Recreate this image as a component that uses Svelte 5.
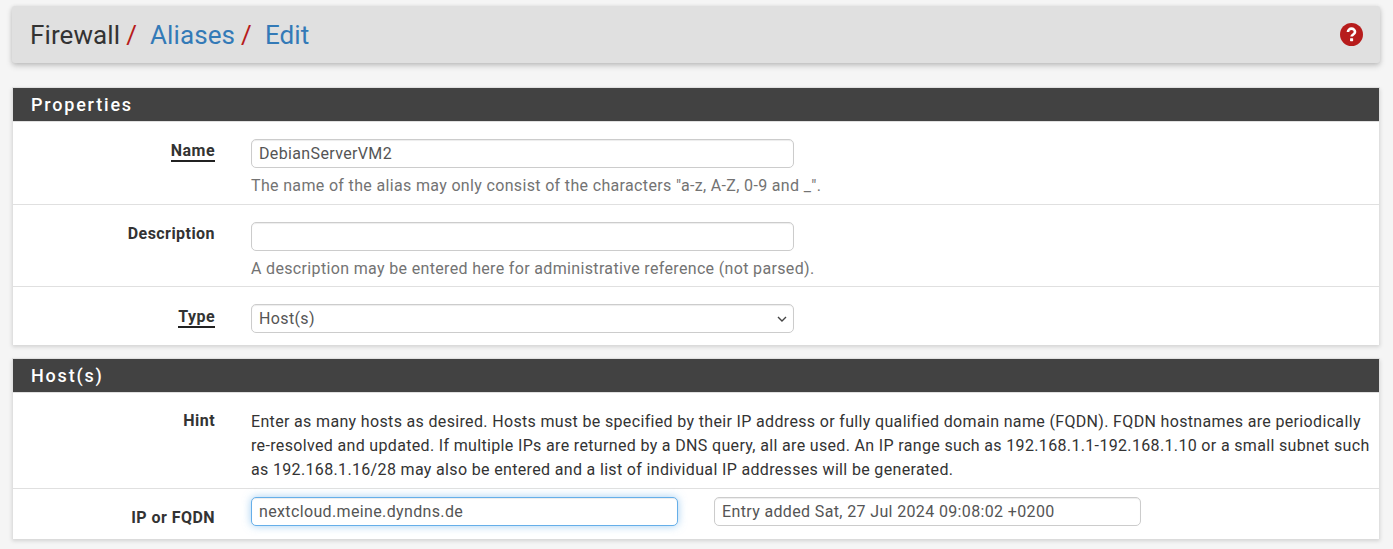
<script lang="ts">
	// pfSense alias edit page
	const hint =
		'Enter as many hosts as desired. Hosts must be specified by their IP address or fully qualified domain name (FQDN). FQDN hostnames are periodically re-resolved and updated. If multiple IPs are returned by a DNS query, all are used. An IP range such as 192.168.1.1-192.168.1.10 or a small subnet such as 192.168.1.16/28 may also be entered and a list of individual IP addresses will be generated.';
</script>

<div class="page">
	<header class="crumbs">
		<h1>
			<span>Firewall</span><span class="sep">/</span><a href="#aliases">Aliases</a><span class="sep">/</span><a href="#edit">Edit</a>
		</h1>
		<svg class="help" viewBox="0 0 24 24" aria-hidden="true">
			<circle cx="12" cy="12" r="12" fill="#b71c1c" />
			<path d="M8.3 9.4a3.7 3.5 0 0 1 7.4 0c0 2.5-3.6 2.6-3.6 4.8" fill="none" stroke="#fff" stroke-width="2.7" />
			<rect x="10.5" y="15.8" width="3.2" height="3.2" rx=".5" fill="#fff" />
		</svg>
	</header>

	<section class="panel">
		<h2>Properties</h2>
		<div class="row row-name">
			<span class="label req">Name</span>
			<div class="field">
				<input class="wide" type="text" value="DebianServerVM2" />
				<p class="help-text">The name of the alias may only consist of the characters "a-z, A-Z, 0-9 and _".</p>
			</div>
		</div>
		<div class="row row-name">
			<span class="label">Description</span>
			<div class="field">
				<input class="wide" type="text" value="" />
				<p class="help-text">A description may be entered here for administrative reference (not parsed).</p>
			</div>
		</div>
		<div class="row row-type">
			<span class="label req type-label">Type</span>
			<div class="field">
				<div class="select wide">
					<span>Host(s)</span>
					<svg viewBox="0 0 10 6" aria-hidden="true"><path d="M1 1l4 4 4-4" fill="none" stroke="#444" stroke-width="1.4" /></svg>
				</div>
			</div>
		</div>
	</section>

	<section class="panel">
		<h2>Host(s)</h2>
		<div class="row row-hint">
			<span class="label">Hint</span>
			<p class="hint">{hint}</p>
		</div>
		<div class="row row-ip">
			<span class="label ip-label">IP or FQDN</span>
			<div class="ip-fields">
				<input class="addr focused" type="text" value="nextcloud.meine.dyndns.de" />
				<input class="addr" type="text" value="Entry added Sat, 27 Jul 2024 09:08:02 +0200" />
			</div>
		</div>
	</section>
</div>

<style>
	:global(body) {
		margin: 0;
		background: #f5f5f5;
		overflow: hidden;
	}
	.page {
		height: 549px;
		overflow: hidden;
		padding: 6px 13px 0 12px;
		box-sizing: border-box;
		font-family: Roboto, "Liberation Sans", sans-serif;
		font-size: 16px;
		letter-spacing: 0.34px;
		color: #212121;
	}
	.crumbs {
		display: flex;
		align-items: center;
		justify-content: space-between;
		height: 57px;
		margin: 0 0 24px;
		padding: 2px 17px 0 18px;
		box-sizing: border-box;
		background: #e0e0e0;
		border-radius: 3px;
		letter-spacing: 0;
		box-shadow: 0 3px 6px rgba(0, 0, 0, 0.16), 0 1px 4px rgba(0, 0, 0, 0.12);
	}
	h1 {
		margin: 0;
		font-size: 26px;
		font-weight: 400;
		letter-spacing: 0.1px;
		line-height: 1.1;
		color: #333;
	}
	h1 a {
		color: #337ab7;
		text-decoration: none;
	}
	.sep {
		color: #b71c1c;
		padding: 0 13px 0 6px;
	}
	.help {
		width: 23px;
		height: 23px;
		margin-top: -2px;
	}
	.panel {
		background: #fff;
		margin-bottom: 13px;
		box-shadow: 0 2px 4px rgba(0, 0, 0, 0.14);
		border: 1px solid #e0e0e0;
		border-bottom: none;
	}
	h2 {
		margin: 0;
		height: 34px;
		padding: 0 18px;
		box-sizing: border-box;
		background: #424242;
		border-bottom: 1px solid #e0e0e0;
		color: #fff;
		font-size: 18px;
		font-weight: 500;
		letter-spacing: 1.8px;
		line-height: 33px;
	}
	.row {
		display: grid;
		grid-template-columns: 202px 1fr;
		column-gap: 36px;
		border-bottom: 1px solid #e0e0e0;
		box-sizing: border-box;
	}
	.row:last-child {
		border-bottom: none;
	}
	.row-name {
		height: 83px;
		padding-top: 17px;
	}
	.row-name + .row-name {
		height: 82px;
	}
	.row-type {
		height: 58px;
		padding-top: 17px;
	}
	.row-hint {
		height: 96px;
		padding-top: 17px;
	}
	.row-ip {
		height: 50px;
		padding-top: 8px;
	}
	.label {
		text-align: right;
		font-weight: 700;
		font-size: 16px;
		letter-spacing: 0.45px;
		line-height: 20px;
		justify-self: end;
		height: fit-content;
		margin-top: 2px;
		color: #333;
	}
	.row-hint .label {
		margin-top: 1px;
	}
	.req {
		border-bottom: 2px solid #212121;
		line-height: 19px;
	}
	.type-label {
		margin-top: 3px;
	}
	.ip-label {
		margin-top: 11px;
	}
	.field {
		min-width: 0;
	}
	input,
	.select {
		display: block;
		height: 29px;
		padding: 0 7px;
		box-sizing: border-box;
		background: #fff;
		border: 1px solid #ccc;
		border-radius: 5px;
		color: #555;
		font: 400 16px Roboto, "Liberation Sans", sans-serif;
		letter-spacing: 0.36px;
		box-shadow: inset 0 1px 1px rgba(0, 0, 0, 0.075);
		outline: none;
	}
	.wide {
		width: 543px;
	}
	.select {
		display: flex;
		align-items: center;
		justify-content: space-between;
	}
	.select svg {
		width: 10px;
		height: 6px;
		margin-right: -1px;
	}
	.help-text {
		margin: 7px 0 0;
		line-height: 22px;
		color: #737373;
	}
	.hint {
		margin: 0;
		padding-right: 6px;
		line-height: 24px;
		color: #333;
	}
	.ip-fields {
		display: flex;
		gap: 36px;
	}
	.addr {
		width: 427px;
	}
	.focused {
		border-color: #66afe9;
		box-shadow: inset 0 1px 1px rgba(0, 0, 0, 0.075), 0 0 8px rgba(102, 175, 233, 0.6);
	}
</style>
